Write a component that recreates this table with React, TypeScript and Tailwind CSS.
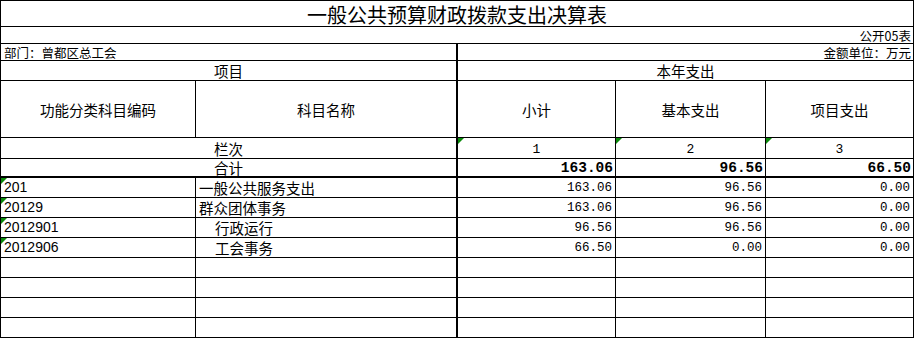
const cjk = "font-['Noto_Sans_CJK_SC','Noto_Sans',sans-serif]";
const mono = "font-['Liberation_Mono','Noto_Sans_CJK_SC',monospace]";
const sans = "font-['Liberation_Sans','Noto_Sans_CJK_SC',sans-serif]";

const cell = "relative flex items-center shrink-0 border-b border-r border-black whitespace-nowrap";

type Row = {
  code: string;
  name: string;
  indent?: boolean;
  total?: string;
  basic?: string;
  project?: string;
};

const rows: Row[] = [
  { code: "201", name: "一般公共服务支出", total: "163.06", basic: "96.56", project: "0.00" },
  { code: "20129", name: "群众团体事务", total: "163.06", basic: "96.56", project: "0.00" },
  { code: "2012901", name: "行政运行", indent: true, total: "96.56", basic: "96.56", project: "0.00" },
  { code: "2012906", name: "工会事务", indent: true, total: "66.50", basic: "0.00", project: "0.00" },
  { code: "", name: "" },
  { code: "", name: "" },
  { code: "", name: "" },
  { code: "", name: "" },
];

// Excel's little green "number stored as text" marker
function Flag() {
  return (
    <svg className="absolute left-0 top-0" width="6" height="6" viewBox="0 0 6 6">
      <polygon points="0,0 6,0 0,6" fill="#0a8a0a" />
    </svg>
  );
}

export default function App() {
  return (
    <div className={`w-[917px] h-[339px] bg-white text-black ${cjk}`}>
      <div className="w-[914px] border-t border-l border-black flex flex-col">
        {/* title */}
        <div className={`${cell} w-[913px] h-[26px] justify-center pt-[2px] text-[20px] leading-[22px]`}>
          一般公共预算财政拨款支出决算表
        </div>
        <div className={`${cell} w-[913px] h-[17px] justify-end pr-[2px] pt-[1px] text-[12.5px] leading-[13px]`}>
          公开05表
        </div>
        <div className="flex">
          <div className={`${cell} w-[457px] h-[17px] border-r-2 pl-[3px] pt-[1px] text-[12.5px] leading-[13px]`}>
            部门：曾都区总工会
          </div>
          <div className={`${cell} w-[456px] h-[17px] justify-end pr-[2px] pt-[1px] text-[12.5px] leading-[13px]`}>
            金额单位：万元
          </div>
        </div>

        {/* headers */}
        <div className="flex text-[14.5px] leading-[17px]">
          <div className={`${cell} w-[457px] h-[20px] border-r-2 justify-center`}>项目</div>
          <div className={`${cell} w-[456px] h-[20px] justify-center`}>本年支出</div>
        </div>
        <div className="flex text-[14.5px] leading-[17px]">
          <div className={`${cell} w-[195px] h-[57px] justify-center`}>功能分类科目编码</div>
          <div className={`${cell} w-[262px] h-[57px] border-r-2 justify-center`}>科目名称</div>
          <div className={`${cell} w-[158px] h-[57px] justify-center`}>小计</div>
          <div className={`${cell} w-[150px] h-[57px] justify-center`}>基本支出</div>
          <div className={`${cell} w-[148px] h-[57px] justify-center`}>项目支出</div>
        </div>
        <div className="flex leading-[17px]">
          <div className={`${cell} w-[457px] h-[21px] border-r-2 justify-center text-[14.5px]`}>栏次</div>
          <div className={`${cell} w-[158px] h-[21px] justify-center pt-[2px] text-[13px] ${mono}`}><Flag />1</div>
          <div className={`${cell} w-[150px] h-[21px] justify-center pt-[2px] text-[13px] ${mono}`}><Flag />2</div>
          <div className={`${cell} w-[148px] h-[21px] justify-center pt-[2px] text-[13px] ${mono}`}><Flag />3</div>
        </div>
        <div className="flex leading-[16px]">
          <div className={`${cell} w-[457px] h-[19px] border-b-2 border-r-2 justify-center text-[14.5px]`}>合计</div>
          <div className={`${cell} w-[158px] h-[19px] border-b-2 justify-end pr-[2px] text-[14.5px] font-bold ${mono}`}>163.06</div>
          <div className={`${cell} w-[150px] h-[19px] border-b-2 justify-end pr-[2px] text-[14.5px] font-bold ${mono}`}>96.56</div>
          <div className={`${cell} w-[148px] h-[19px] border-b-2 justify-end pr-[2px] text-[14.5px] font-bold ${mono}`}>66.50</div>
        </div>

        {/* body */}
        {rows.map((r, i) => (
          <div key={i} className="flex leading-[17px]">
            <div className={`${cell} w-[195px] h-[20px] pl-[3px] text-[14px] ${sans}`}>
              {r.code && <Flag />}
              {r.code}
            </div>
            <div className={`${cell} w-[262px] h-[20px] border-r-2 text-[14.5px] ${r.indent ? "pl-[19px]" : "pl-[3px]"}`}>
              {r.name}
            </div>
            <div className={`${cell} w-[158px] h-[20px] justify-end pr-[3px] pt-[1px] text-[12.5px] ${mono}`}>{r.total}</div>
            <div className={`${cell} w-[150px] h-[20px] justify-end pr-[3px] pt-[1px] text-[12.5px] ${mono}`}>{r.basic}</div>
            <div className={`${cell} w-[148px] h-[20px] justify-end pr-[3px] pt-[1px] text-[12.5px] ${mono}`}>{r.project}</div>
          </div>
        ))}
      </div>
    </div>
  );
}
